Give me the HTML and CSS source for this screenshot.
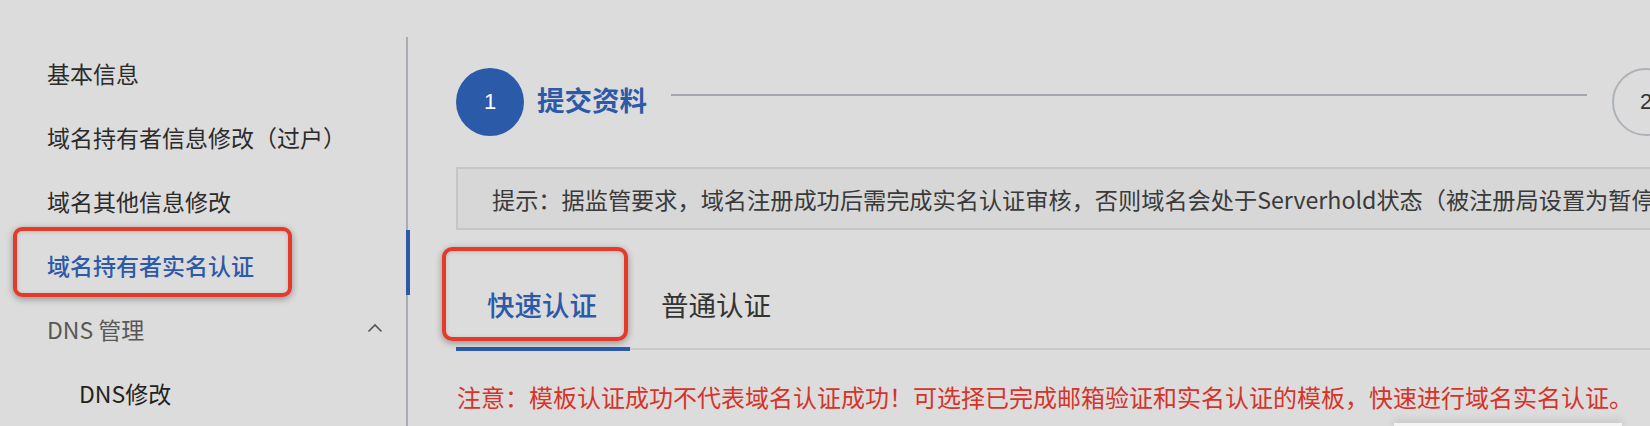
FILE: index.html
```html
<!DOCTYPE html>
<html lang="zh-CN">
<head>
<meta charset="utf-8">
<title>域名持有者实名认证</title>
<link rel="stylesheet" href="styles.css">
</head>
<body>
<div class="page">
  <aside class="sidebar">
    <ul class="menu">
      <li class="menu-item">基本信息</li>
      <li class="menu-item">域名持有者信息修改（过户）</li>
      <li class="menu-item">域名其他信息修改</li>
      <li class="menu-item active">域名持有者实名认证<span class="indicator"></span><span class="mark mark-side"></span></li>
      <li class="menu-item group">DNS 管理<svg class="chevron" width="16" height="10" viewBox="0 0 16 10"><polyline points="1.5,8.5 8,2 14.5,8.5" fill="none" stroke="#555" stroke-width="1.6"/></svg></li>
      <li class="menu-item sub">DNS修改</li>
    </ul>
  </aside>
  <main class="main">
    <div class="steps">
      <div class="step-circle current">1</div>
      <div class="step-title">提交资料</div>
      <div class="step-line"></div>
      <div class="step-circle next">2</div>
    </div>
    <div class="tip">提示：据监管要求，域名注册成功后需完成实名认证审核，否则域名会处于Serverhold状态（被注册局设置为暂停解析），无法正常使用。</div>
    <div class="tabs">
      <div class="tab active">快速认证<span class="mark mark-tab"></span></div>
      <div class="tab">普通认证</div>
    </div>
    <p class="notice">注意：模板认证成功不代表域名认证成功！可选择已完成邮箱验证和实名认证的模板，快速进行域名实名认证。</p>
  </main>
</div>
<div class="popover"></div>
</body>
</html>
```
FILE: styles.css
```css
html, body {
  margin: 0;
  padding: 0;
  width: 1650px;
  height: 426px;
  overflow: hidden;
  background: #dcdcdc;
  font-family: "Noto Sans CJK SC", "Noto Sans", sans-serif;
  color: #2b2b2b;
}

.page {
  display: flex;
  align-items: flex-start;
  width: 1650px;
  height: 426px;
  overflow: hidden;
}

.sidebar {
  flex: none;
  width: 406px;
  margin-top: 37px;
  height: 389px;
  border-right: 2px solid #a9adb3;
}

.menu {
  list-style: none;
  margin: 0;
  padding: 4px 0 0 0;
}

.menu-item {
  position: relative;
  display: flex;
  align-items: center;
  height: 64px;
  padding-left: 47px;
  font-size: 23px;
  line-height: 1;
  color: #2b2b2b;
}

.menu-item.active {
  color: #2c5aa8;
  font-weight: 500;
}

.menu-item.group {
  color: #585858;
  justify-content: space-between;
  padding-right: 23px;
}

.chevron {
  margin-top: -2px;
}

.menu-item.sub {
  padding-left: 79px;
  color: #222;
}

.indicator {
  position: absolute;
  right: -4px;
  top: -3px;
  width: 4px;
  height: 65px;
  background: #2c5aa8;
}

.mark {
  position: absolute;
  border: 4px solid #e5392a;
  border-radius: 9px;
  box-shadow: 0 2px 7px rgba(0, 0, 0, 0.35), inset 0 1px 4px rgba(0, 0, 0, 0.15);
  pointer-events: none;
}

.mark-side {
  left: 13px;
  top: -6px;
  width: 271px;
  height: 62px;
}

.main {
  flex: none;
  width: 1300px;
  padding-left: 48px;
  margin-top: 68px;
}

.steps {
  display: flex;
  align-items: center;
  height: 68px;
}

.step-circle {
  flex: none;
  box-sizing: border-box;
  width: 68px;
  height: 68px;
  border-radius: 50%;
  display: flex;
  align-items: center;
  justify-content: center;
  font-family: "Liberation Sans", "Noto Sans", sans-serif;
  font-size: 22px;
}

.step-circle.current {
  background: #2a5aa8;
  color: #fff;
  font-weight: 300;
}

.step-circle.next {
  border: 2px solid #aeb2b8;
  color: #333;
  margin-left: 25px;
}

.step-title {
  margin-left: 13px;
  font-size: 27.5px;
  font-weight: 700;
  color: #2c5aa8;
  margin-top: -6px;
}

.step-line {
  flex: none;
  width: 916px;
  height: 2px;
  margin-left: 24px;
  margin-top: -14px;
  background: #a3a7ad;
}

.tip {
  margin-top: 31px;
  box-sizing: border-box;
  height: 63px;
  width: 1300px;
  padding-left: 34px;
  border: 2px solid #c6c6c6;
  background: #d7d7d7;
  display: flex;
  align-items: center;
  white-space: nowrap;
  overflow: hidden;
  font-size: 23.2px;
  color: #3a3a3a;
}

.tabs {
  display: flex;
  margin-top: 31px;
  width: 1300px;
  border-bottom: 2px solid #c9c9c9;
}

.tab {
  position: relative;
  height: 86px;
  line-height: 86px;
  padding: 0 33px 0 31px;
  font-size: 27.5px;
  color: #333;
  border-bottom: 4px solid transparent;
  margin-bottom: -3px;
}

.tab.active {
  color: #2c5aa8;
  font-weight: 500;
  border-bottom-color: #2c5aa8;
}

.mark-tab {
  left: -14px;
  top: -14px;
  width: 178px;
  height: 86px;
  border-radius: 10px;
}

.notice {
  margin: 31px 0 0 1px;
  font-size: 24px;
  line-height: 32px;
  color: #d6332a;
  white-space: nowrap;
}

.popover {
  position: absolute;
  left: 1394px;
  top: 423px;
  width: 228px;
  height: 3px;
  background: #f4f4f4;
  box-shadow: 0 -1px 8px rgba(0, 0, 0, 0.25);
}
```
